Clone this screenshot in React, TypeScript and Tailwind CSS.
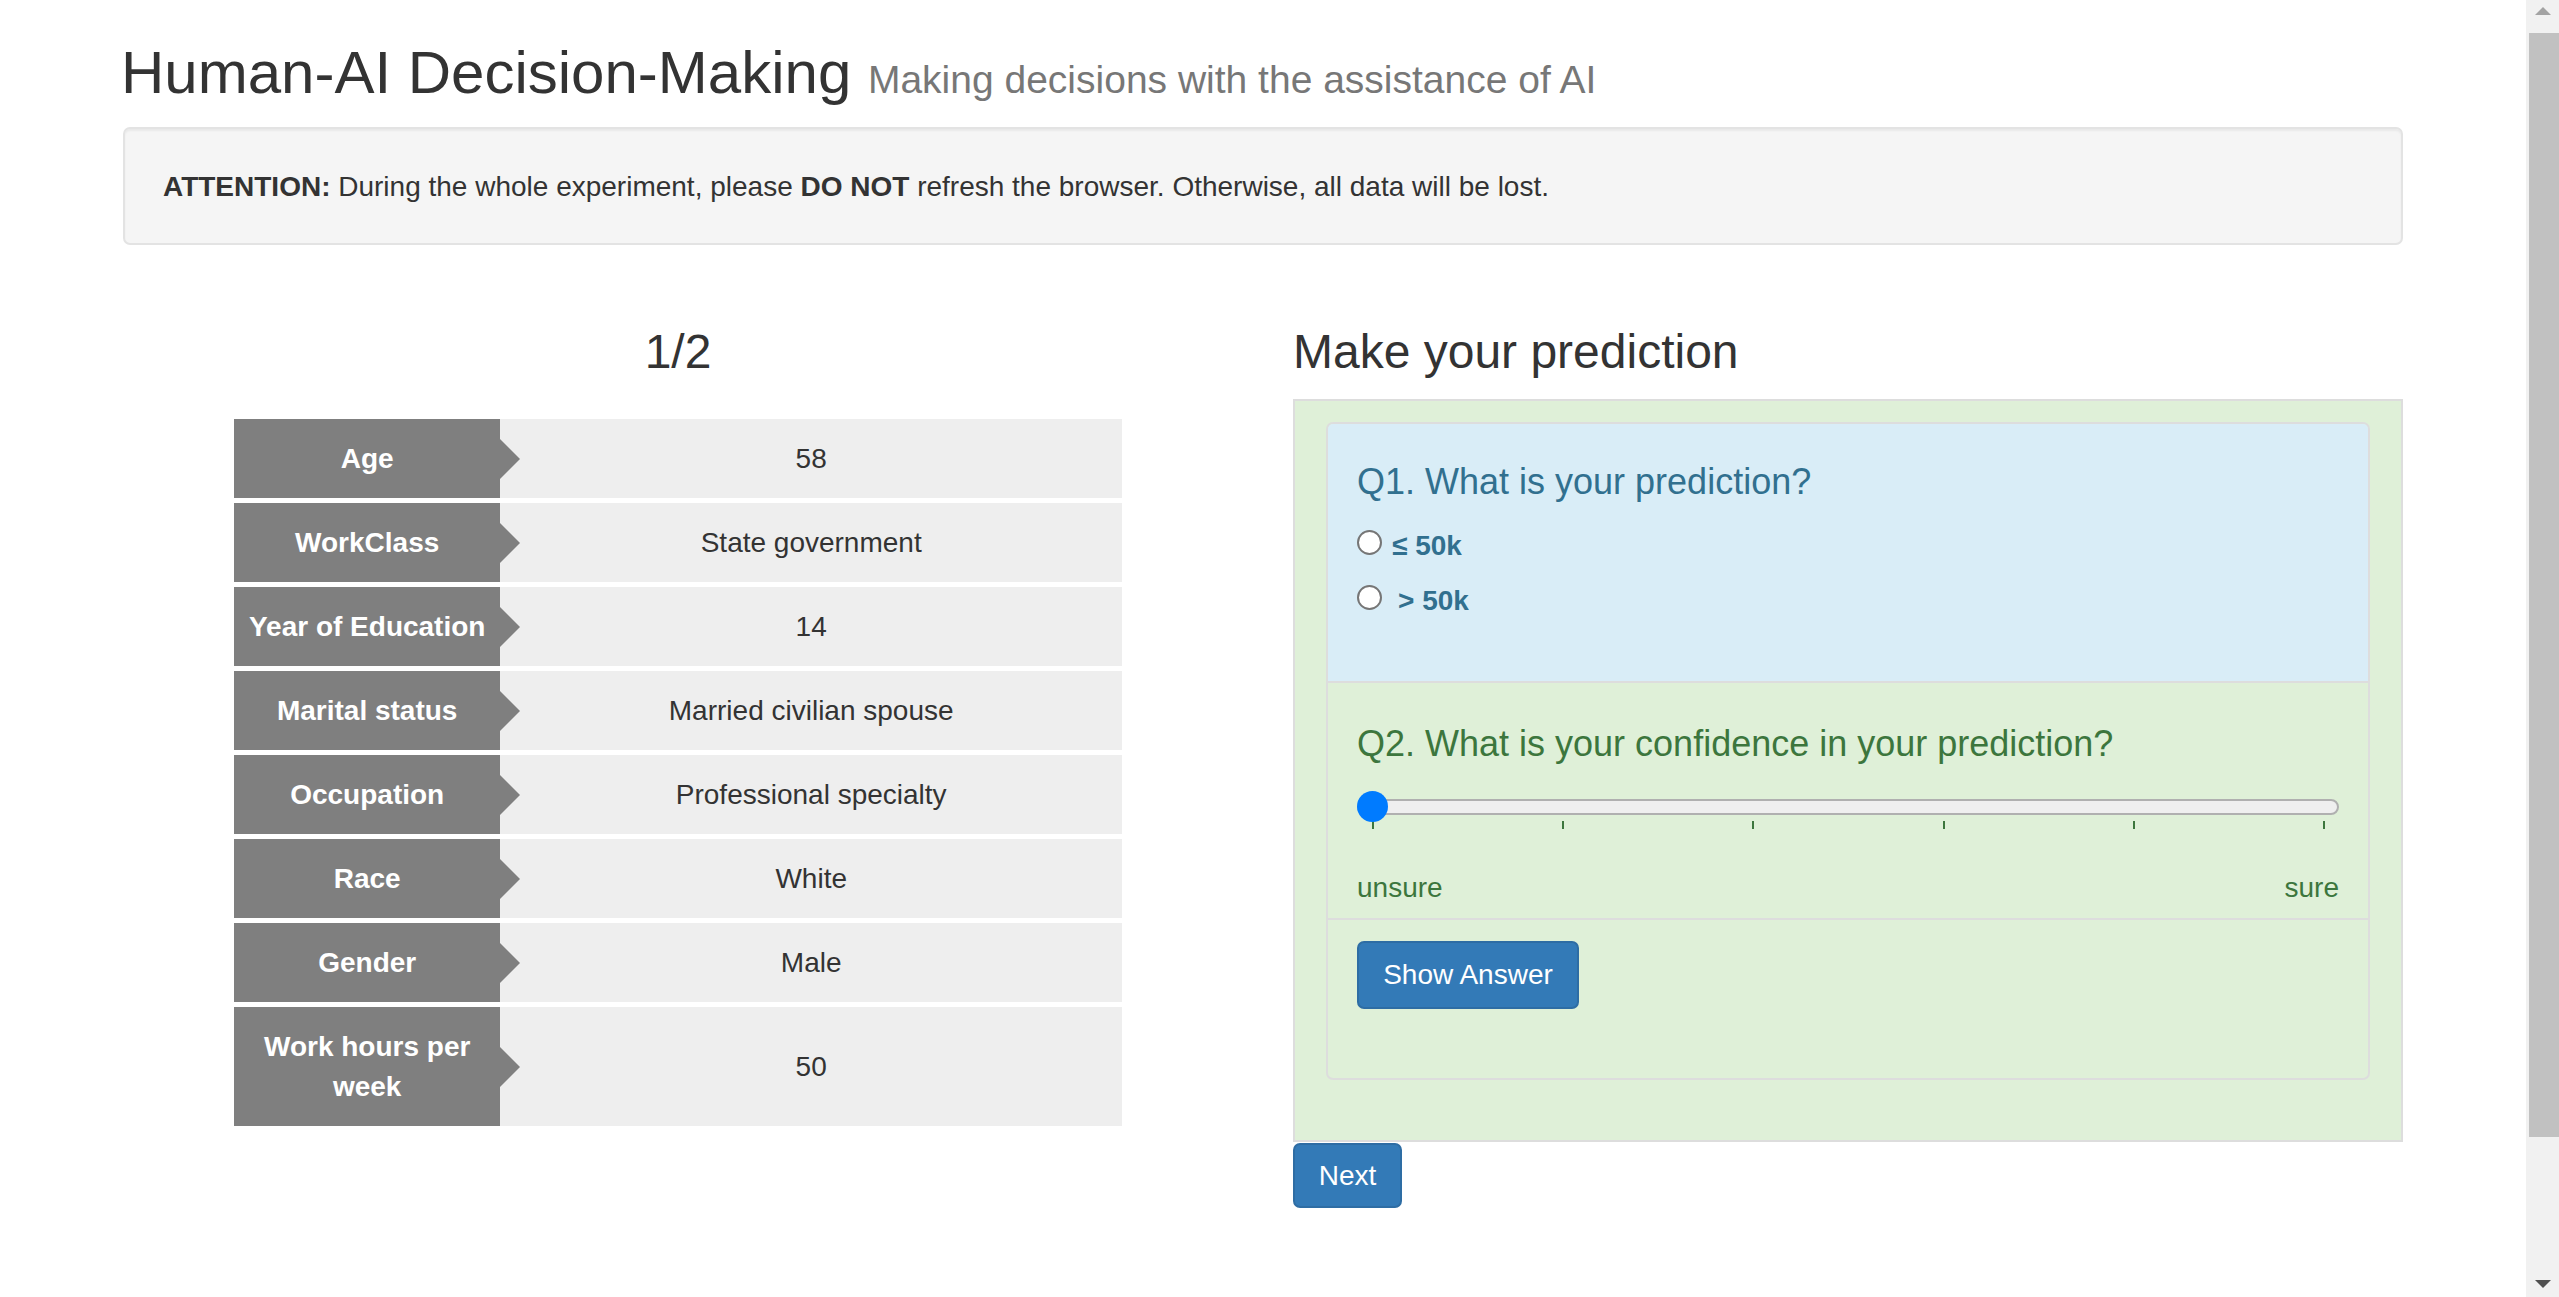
import React from "react";

const rows: [string, string][] = [
  ["Age", "58"],
  ["WorkClass", "State government"],
  ["Year of Education", "14"],
  ["Marital status", "Married civilian spouse"],
  ["Occupation", "Professional specialty"],
  ["Race", "White"],
  ["Gender", "Male"],
  ["Work hours per week", "50"],
];

function Radio() {
  return (
    <span className="mt-[4px] inline-block h-[25px] w-[25px] shrink-0 rounded-full border-2 border-[#767676] bg-white" />
  );
}

export default function App() {
  return (
    <div
      className="flex h-screen w-full overflow-hidden bg-white text-[#333333]"
      style={{ fontFamily: '"Liberation Sans", Arial, sans-serif' }}
    >
      <main className="flex-1 overflow-hidden">
        <div className="px-[123px]">
          {/* Header */}
          <h1 className="ml-[-2px] mt-[40px] h-[66px] whitespace-nowrap text-[60px] font-normal leading-[66px] text-[#333333]">
            Human-AI Decision-Making{" "}
            <small className="text-[39px] leading-none text-[#777777]">
              Making decisions with the assistance of AI
            </small>
          </h1>

          {/* Well */}
          <div className="mt-[21px] rounded-[7px] border-2 border-[#e3e3e3] bg-[#f5f5f5] pb-[36px] pl-[38px] pr-[38px] pt-[38px] text-[28px] leading-[40px] shadow-[inset_0_2px_2px_rgba(0,0,0,0.05)]">
            <b>ATTENTION:</b> During the whole experiment, please <b>DO NOT</b> refresh the browser.
            Otherwise, all data will be lost.
          </div>

          {/* Two columns */}
          <div className="mt-[80px] grid grid-cols-2 gap-x-[60px]">
            {/* Left */}
            <div>
              <h2 className="h-[53px] text-center text-[48px] font-normal leading-[53px]">1/2</h2>
              <div className="mx-auto mt-[41px] flex w-[80%] flex-col gap-[5px] text-[28px] leading-[40px]">
                {rows.map(([k, v]) => (
                  <div key={k} className="flex">
                    <div className="relative flex w-[30%] shrink-0 items-center justify-center bg-[#7f7f7f] px-[8px] pb-[19px] pt-[20px] text-center font-bold text-white">
                      {k}
                      <span className="absolute left-full top-1/2 z-10 h-0 w-0 -translate-y-1/2 border-y-[20px] border-l-[20px] border-y-transparent border-l-[#7f7f7f]" />
                    </div>
                    <div className="flex flex-1 items-center justify-center bg-[#eeeeee] text-center text-[#333333]">
                      {v}
                    </div>
                  </div>
                ))}
              </div>
            </div>

            {/* Right */}
            <div>
              <h2 className="h-[53px] text-[48px] font-normal leading-[53px]">Make your prediction</h2>
              <div className="mt-[21px] border-2 border-[#dddddd] bg-[#dff0d8] px-[31px] pb-[60px] pt-[21px]">
                <div className="overflow-hidden rounded-[7px] border-2 border-[#dddddd]">
                  {/* Q1 */}
                  <div className="border-b-2 border-[#dddddd] bg-[#d9edf7] px-[29px] pb-[60px] pt-[38px]">
                    <h4 className="text-[36px] font-normal leading-[40px] text-[#31708f]">
                      Q1. What is your prediction?
                    </h4>
                    <div className="mt-[24px] flex flex-col gap-[15px] text-[28px] font-bold leading-[40px] text-[#31708f]">
                      <label className="flex items-start gap-[10px]">
                        <Radio />
                        <span>≤ 50k</span>
                      </label>
                      <label className="flex items-start gap-[10px]">
                        <Radio />
                        <span className="ml-[6px]">&gt; 50k</span>
                      </label>
                    </div>
                  </div>

                  {/* Q2 */}
                  <div className="border-b-2 border-[#dddddd] px-[29px] pb-[10px] pt-[41px]">
                    <h4 className="text-[36px] font-normal leading-[40px] text-[#3c763d]">
                      Q2. What is your confidence in your prediction?
                    </h4>
                    <div className="relative mt-[27px] pt-[8px]">
                      <div className="h-[16px] rounded-full border-2 border-[#b0b0b0] bg-[#efefef]" />
                      <span className="absolute left-0 top-0 h-[31px] w-[31px] rounded-full bg-[#007bff]" />
                      <div className="mt-[6px] flex justify-between pl-[15px] pr-[14px]">
                        {[0, 1, 2, 3, 4, 5].map((i) => (
                          <span key={i} className="block h-[8px] w-[2px] bg-[#3c763d]" />
                        ))}
                      </div>
                    </div>
                    <div className="mt-[39px] flex justify-between text-[28px] leading-[40px] text-[#3c763d]">
                      <span>unsure</span>
                      <span>sure</span>
                    </div>
                  </div>

                  {/* Show answer */}
                  <div className="px-[29px] pb-[69px] pt-[21px]">
                    <button className="flex h-[68px] w-[222px] items-center justify-center rounded-[7px] border-2 border-[#2e6da4] bg-[#337ab7] text-[28px] text-white">
                      Show Answer
                    </button>
                  </div>
                </div>
              </div>
              <button className="mt-[1px] flex h-[65px] w-[109px] items-center justify-center rounded-[7px] border-2 border-[#2e6da4] bg-[#337ab7] text-[28px] text-white">
                Next
              </button>
            </div>
          </div>
        </div>
      </main>

      {/* Scrollbar */}
      <div className="flex w-[33px] shrink-0 flex-col items-center bg-[#f1f1f1]">
        <div className="flex h-[33px] w-full items-center justify-center">
          <span className="mt-[-12px] h-0 w-0 border-x-[8px] border-b-[8px] border-x-transparent border-b-[#a3a3a3]" />
        </div>
        <div className="ml-[2px] mt-0 h-[1104px] w-[30px] bg-[#c1c1c1]" />
        <div className="flex-1" />
        <div className="flex h-[33px] w-full items-center justify-center">
          <span className="mt-[6px] h-0 w-0 border-x-[8px] border-t-[8px] border-x-transparent border-t-[#505050]" />
        </div>
      </div>
    </div>
  );
}
